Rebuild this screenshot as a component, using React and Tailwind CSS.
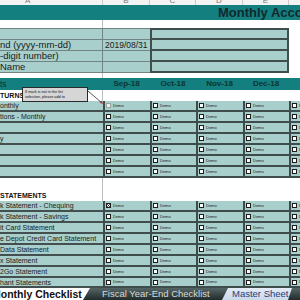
import React from 'react';

const cols = [
  { key: 'sep', label: 'Sep-18', w: 'w-[47px]' },
  { key: 'oct', label: 'Oct-18', w: 'w-[46px]' },
  { key: 'nov', label: 'Nov-18', w: 'w-[47px]' },
  { key: 'dec', label: 'Dec-18', w: 'w-[46px]' },
  { key: 'jan', label: 'Jan-19', w: 'w-[46px]' },
];

const checklist = ['onthly', 'tions - Monthly', '', 'y', '', '', ''];

const statements = [
  'k Statement - Chequing',
  'k Statement - Savings',
  'it Card Statement',
  'e Depot Credit Card Statement',
  'Data Statement',
  'x Statement',
  '2Go Statement',
  'hant Statements',
];

const Box = ({ state }) => {
  if (state === 'checked') {
    return (
      <svg width="5" height="5" viewBox="0 0 5 5" className="shrink-0">
        <rect x="0.5" y="0.5" width="4" height="4" fill="#fff" stroke="#1d1d1d" />
        <path d="M1.2 1.2 L3.8 3.8 M3.8 1.2 L1.2 3.8" stroke="#1d1d1d" strokeWidth="0.9" />
      </svg>
    );
  }
  if (state === 'dim') {
    return <span className="w-[5px] h-[5px] shrink-0 border border-[#9aa4a4] bg-[#eef0f0]" />;
  }
  return <span className="w-[5px] h-[5px] shrink-0 border border-[#1d1d1d] bg-white" />;
};

const CheckRow = ({ label, h, first, checked }) => (
  <div className={`flex shrink-0 ${h}`}>
    <div className="w-[103px] shrink-0 bg-[#a8cfcb] border-b-2 border-[#43504f] text-[7px] leading-[9px] text-[#1c1c1c] whitespace-nowrap overflow-hidden">
      {label}
    </div>
    {cols.map((c, i) => (
      <div
        key={c.key}
        className={`${c.w} shrink-0 bg-[#a8cfcb] border-l-2 border-b-2 border-[#3f4c4c] flex items-center gap-[2px] pl-[1px]`}
      >
        <Box state={i === 0 && first ? 'dim' : i === 0 && checked ? 'checked' : 'empty'} />
        <span className="text-[4px] leading-none text-[#1c1c1c]">Demo</span>
      </div>
    ))}
  </div>
);

const WhiteRow = ({ h, children }) => (
  <div className={`flex shrink-0 ${h} bg-white`}>
    <div className="w-[103px] shrink-0 border-r border-[#b9bfbf] text-[7px] leading-[11px] font-bold text-[#111] whitespace-nowrap overflow-hidden">
      {children}
    </div>
  </div>
);

const InfoRow = ({ h, label, value, top }) => (
  <div className={`flex shrink-0 ${h}`}>
    <div
      className={`w-[103px] shrink-0 bg-[#a8cfcb] border-b border-r border-[#6f8483] ${top ? 'border-t' : ''} text-[9.5px] leading-[10px] text-[#1a1a1a] whitespace-nowrap overflow-hidden`}
    >
      {label}
    </div>
    <div
      className={`w-[47px] shrink-0 bg-[#a8cfcb] border-b border-[#6f8483] ${top ? 'border-t' : ''} text-[8.5px] leading-[10px] pl-[2px] text-[#1a1a1a] whitespace-nowrap`}
    >
      {value}
    </div>
    <div
      className={`w-[139px] shrink-0 bg-[#a8cfcb] border-l-2 border-r-2 border-b-2 border-[#414e4e] ${top ? 'border-t-2' : ''}`}
    />
    <div className="flex-1 bg-white" />
  </div>
);

export default function App() {
  return (
    <div className="relative w-[300px] h-[300px] overflow-hidden bg-white flex flex-col font-['Liberation_Sans',Arial,sans-serif]">
      {/* column letters */}
      <div className="flex h-[5px] shrink-0 bg-[#f3f3f3] overflow-hidden text-[8px] text-[#7a7a7a]">
        <div className="w-[103px] shrink-0 border-r border-[#c9c9c9] flex items-end pl-[25px] leading-[8px]">A</div>
        {['B', 'C', 'D', 'E', 'F'].map((l, i) => (
          <div key={l} className={`${cols[i].w} shrink-0 border-r border-[#c9c9c9] flex items-end justify-center leading-[8px]`}>
            {l}
          </div>
        ))}
      </div>

      {/* title */}
      <div className="h-[15px] shrink-0 bg-[#137f7e] pl-[218px] whitespace-nowrap text-[13px] leading-[15px] font-bold text-[#10292d]">
        Monthly Accounting Checklist
      </div>

      <WhiteRow h="h-[8px]" />

      <InfoRow h="h-[12px]" top />
      <InfoRow h="h-[11px]" label="nd (yyyy-mm-dd)" value="2019/08/31" />
      <InfoRow h="h-[11px]" label="-digit number)" />
      <InfoRow h="h-[11px]" label="Name" />

      <WhiteRow h="h-[5px]" />

      {/* month band */}
      <div className="flex h-[12px] shrink-0 bg-[#137f7e] text-[8px] leading-[12px] font-bold text-[#0d3434]">
        <div className="w-[103px] shrink-0 font-normal text-[8.5px]">ts</div>
        {cols.slice(0, 4).map((c) => (
          <div key={c.key} className={`${c.w} shrink-0 text-center`}>
            {c.label}
          </div>
        ))}
      </div>

      <WhiteRow h="h-[11px]">TURNS</WhiteRow>

      {checklist.map((l, i) => (
        <CheckRow key={i} label={l} h="h-[11px]" first={i === 0} />
      ))}

      <WhiteRow h="h-[12px]" />
      <WhiteRow h="h-[11px]">STATEMENTS</WhiteRow>

      {statements.map((l, i) => (
        <CheckRow key={l} label={l} h={i === 7 ? 'h-[10px]' : 'h-[11px]'} checked={i === 0} />
      ))}

      {/* sheet tabs */}
      <div className="flex h-[12px] shrink-0 bg-gradient-to-b from-[#566666] to-[#222c2c] overflow-hidden text-[9.5px] leading-[12px] whitespace-nowrap">
        <div className="w-[90px] shrink-0 bg-white [clip-path:polygon(0_0,100%_0,calc(100%-7px)_100%,0_100%)] font-bold text-[10.5px] text-[#111]">
          <span className="ml-[-8px]">Monthly Checklist</span>
        </div>
        <div className="w-[132px] shrink-0 pl-[12px] text-[#d3dada]">Fiscal Year-End Checklist</div>
        <div className="w-[70px] shrink-0 bg-gradient-to-b from-[#e4ecf6] to-[#c9d8ea] [clip-path:polygon(6px_0,100%_0,calc(100%-4px)_100%,0_100%)] pl-[10px] text-[#1f3d78]">
          Master Sheet
        </div>
      </div>

      {/* comment box */}
      <div className="absolute left-[22px] top-[87px] w-[66px] h-[15px] bg-[#d6d6d6] border border-[#2a2a2a] px-[2px] pt-[2px] text-[3.8px] leading-[5px] text-[#111]">
        If mark is not in the list
        <br />
        selection, please add to
      </div>
      <svg className="absolute left-0 top-0" width="300" height="300" viewBox="0 0 300 300">
        <line x1="88" y1="91" x2="102" y2="103" stroke="#2a2a2a" strokeWidth="0.8" />
        <path d="M103 104 L99.5 102.8 L101.8 100.6 Z" fill="#b23a3a" />
      </svg>
    </div>
  );
}
